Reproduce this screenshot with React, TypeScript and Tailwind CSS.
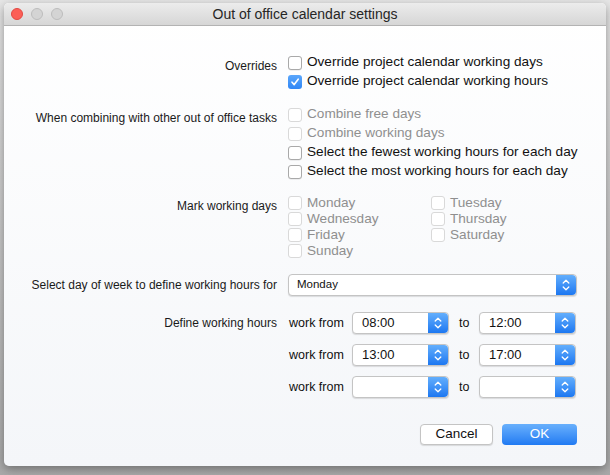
import React from "react";

const F = "font-['Liberation_Sans',Arial,sans-serif]";

function Check({ checked = false, disabled = false }: { checked?: boolean; disabled?: boolean }) {
  if (checked) {
    return (
      <div className="w-[14px] h-[14px] rounded-[3px] bg-gradient-to-b from-[#5aa6fb] to-[#2f86f5] flex items-center justify-center shrink-0">
        <svg width="10" height="10" viewBox="0 0 10 10">
          <path d="M2 5.2 L4.2 7.6 L8.2 2.2" stroke="white" strokeWidth="1.6" fill="none" strokeLinecap="round" strokeLinejoin="round" />
        </svg>
      </div>
    );
  }
  return (
    <div
      className={
        "w-[14px] h-[14px] rounded-[3px] bg-white border shrink-0 " +
        (disabled ? "border-[#d9d9d9]" : "border-[#a9a9a9] shadow-[0_0.5px_0.5px_rgba(0,0,0,0.12)]")
      }
    />
  );
}

function CRow({ text, checked, disabled, h = "h-[19px]" }: { text: string; checked?: boolean; disabled?: boolean; h?: string }) {
  return (
    <div className={"flex items-center gap-[5px] " + h}>
      <Check checked={checked} disabled={disabled} />
      <span className={"text-[13.6px] whitespace-nowrap " + (disabled ? "text-[#8f8f8f]" : "text-[#111]")}>{text}</span>
    </div>
  );
}

function Label({ children, lh = "leading-[19px] pt-[4px]" }: { children: React.ReactNode; lh?: string }) {
  return <div className={"w-[273px] shrink-0 text-right text-[12px] text-[#1a1a1a] whitespace-nowrap " + lh}>{children}</div>;
}

function Spin() {
  return (
    <div className="w-[20px] h-full rounded-r-[4px] bg-gradient-to-b from-[#62aefc] to-[#1b77f1] flex items-center justify-center shrink-0">
      <svg width="8" height="14" viewBox="0 0 8 14">
        <path d="M1.2 5 L4 2.2 L6.8 5" stroke="white" strokeWidth="1.3" fill="none" strokeLinecap="round" strokeLinejoin="round" />
        <path d="M1.2 9 L4 11.8 L6.8 9" stroke="white" strokeWidth="1.3" fill="none" strokeLinecap="round" strokeLinejoin="round" />
      </svg>
    </div>
  );
}

function Select({ value, w, textCls = "text-[13px]", pl = "pl-[9px]" }: { value: string; w: string; textCls?: string; pl?: string }) {
  return (
    <div className={"h-[22px] flex items-stretch bg-white rounded-[4px] border border-[#c4c4c4] shadow-[0_1px_1px_rgba(0,0,0,0.12)] " + w}>
      <div className={"flex-1 flex items-center text-[#111] " + pl + " " + textCls}>{value}</div>
      <Spin />
    </div>
  );
}

function TimeRow({ a, b }: { a: string; b: string }) {
  return (
    <div className="flex items-center h-[22px]">
      <span className="text-[12.5px] text-[#111] w-[64px] pl-[1px] whitespace-nowrap">work from</span>
      <Select value={a} w="w-[97px]" />
      <span className="text-[12.5px] text-[#111] w-[30px] pl-[10px]">to</span>
      <Select value={b} w="w-[97px]" />
    </div>
  );
}

export default function App() {
  return (
    <div className={"w-[610px] h-[475px] bg-gradient-to-b from-[#e6e6e6] to-[#a9a9a9] overflow-hidden pt-[3px] pl-[4px] " + F}>
      <div className="w-[602px] h-[463px] rounded-[5px] flex flex-col overflow-hidden shadow-[0_3px_10px_rgba(0,0,0,0.35)] bg-gradient-to-b from-white to-[#f4f6f9]">
        <div className="h-[23px] shrink-0 relative flex items-center justify-center bg-gradient-to-b from-[#ececec] to-[#d6d6d6] border-b border-[#b3b3b3]">
          <div className="absolute left-[7px] top-[5px] flex gap-[8px]">
            <div className="w-[12px] h-[12px] rounded-full bg-[#fc5f57] border border-[#e14942]" />
            <div className="w-[12px] h-[12px] rounded-full bg-[#d4d4d4] border border-[#bcbcbc]" />
            <div className="w-[12px] h-[12px] rounded-full bg-[#d4d4d4] border border-[#bcbcbc]" />
          </div>
          <span className="text-[14px] text-[#262626]">Out of office calendar settings</span>
        </div>

        <div className="flex flex-col pt-[27px]">
          <div className="flex">
            <Label>Overrides</Label>
            <div className="ml-[11px] flex flex-col">
              <CRow text="Override project calendar working days" />
              <CRow text="Override project calendar working hours" checked />
            </div>
          </div>

          <div className="flex mt-[14px]">
            <Label>When combining with other out of office tasks</Label>
            <div className="ml-[11px] flex flex-col">
              <CRow text="Combine free days" disabled />
              <CRow text="Combine working days" disabled />
              <CRow text="Select the fewest working hours for each day" />
              <CRow text="Select the most working hours for each day" />
            </div>
          </div>

          <div className="flex mt-[14px]">
            <Label lh="leading-[16px] pt-[3px]">Mark working days</Label>
            <div className="ml-[11px] grid grid-cols-[143px_143px]">
              <CRow text="Monday" disabled h="h-[16px]" />
              <CRow text="Tuesday" disabled h="h-[16px]" />
              <CRow text="Wednesday" disabled h="h-[16px]" />
              <CRow text="Thursday" disabled h="h-[16px]" />
              <CRow text="Friday" disabled h="h-[16px]" />
              <CRow text="Saturday" disabled h="h-[16px]" />
              <CRow text="Sunday" disabled h="h-[16px]" />
            </div>
          </div>

          <div className="flex items-center mt-[15px]">
            <div className="w-[273px] shrink-0 text-right text-[12px] text-[#1a1a1a] whitespace-nowrap">Select day of week to define working hours for</div>
            <div className="ml-[11px]">
              <Select value="Monday" w="w-[289px]" textCls="text-[11.5px]" pl="pl-[8px]" />
            </div>
          </div>

          <div className="flex mt-[16px]">
            <div className="w-[273px] shrink-0 text-right text-[12px] text-[#1a1a1a] leading-[22px]">Define working hours</div>
            <div className="ml-[11px] flex flex-col gap-[10px]">
              <TimeRow a="08:00" b="12:00" />
              <TimeRow a="13:00" b="17:00" />
              <TimeRow a="" b="" />
            </div>
          </div>

          <div className="flex justify-end gap-[9px] mt-[26px] pr-[29px]">
            <div className="w-[73px] h-[21px] rounded-[4px] bg-white border border-[#c4c4c4] shadow-[0_1px_1px_rgba(0,0,0,0.12)] flex items-center justify-center text-[13.5px] text-[#111]">Cancel</div>
            <div className="w-[75px] h-[21px] rounded-[4px] bg-gradient-to-b from-[#68b0fc] to-[#1f7af2] flex items-center justify-center text-[13.5px] text-white">OK</div>
          </div>
        </div>
      </div>
    </div>
  );
}
